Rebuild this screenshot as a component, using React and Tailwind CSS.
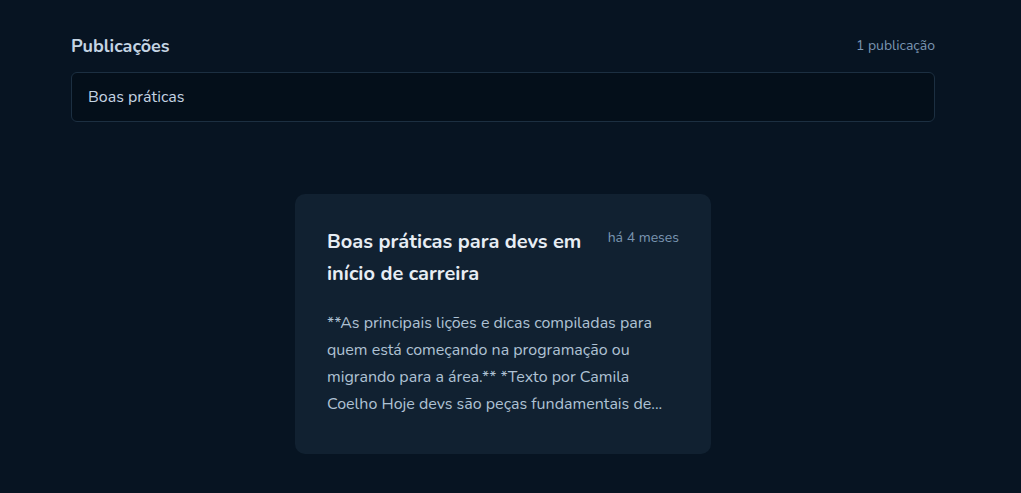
export default function App() {
  const posts = [
    {
      id: 1,
      title: "Boas práticas para devs em início de carreira",
      date: "há 4 meses",
      body: "**As principais lições e dicas compiladas para quem está começando na programação ou migrando para a área.** *Texto por Camila Coelho Hoje devs são peças fundamentais de...",
    },
  ];

  return (
    <div
      className="min-h-screen bg-[#071422] pr-[15px]"
      style={{ fontFamily: '"Nunito", "Lato", "Noto Sans", sans-serif' }}
    >
      <div className="mx-auto w-[864px] pt-[34px]">
        <div className="flex items-center justify-between">
          <h2 className="text-lg font-bold leading-[24px] text-[#c4d4e3]">Publicações</h2>
          <span className="text-sm text-[#7b96b2]">1 publicação</span>
        </div>

        <input
          type="text"
          defaultValue="Boas práticas"
          className="mt-[14px] h-[50px] w-full rounded-md border border-[#1c2f41] bg-[#040f1a] px-4 text-base text-[#c4d4e3] outline-none"
        />

        <div className="mt-[72px] flex justify-center">
          {posts.map((p) => (
            <div
              key={p.id}
              className="h-[260px] w-[416px] overflow-hidden rounded-[10px] bg-[#112131] px-8 pt-8"
            >
              <div className="flex items-start justify-between gap-4">
                <h3 className="w-[260px] text-xl font-bold leading-[32px] text-[#e7edf4]">
                  {p.title}
                </h3>
                <span className="pt-[2px] text-sm text-[#7b96b2] whitespace-nowrap">{p.date}</span>
              </div>
              <p className="mt-5 line-clamp-4 text-base leading-[27px] text-[#afc2d4]">
                {p.body}
              </p>
            </div>
          ))}
        </div>
      </div>
    </div>
  );
}
